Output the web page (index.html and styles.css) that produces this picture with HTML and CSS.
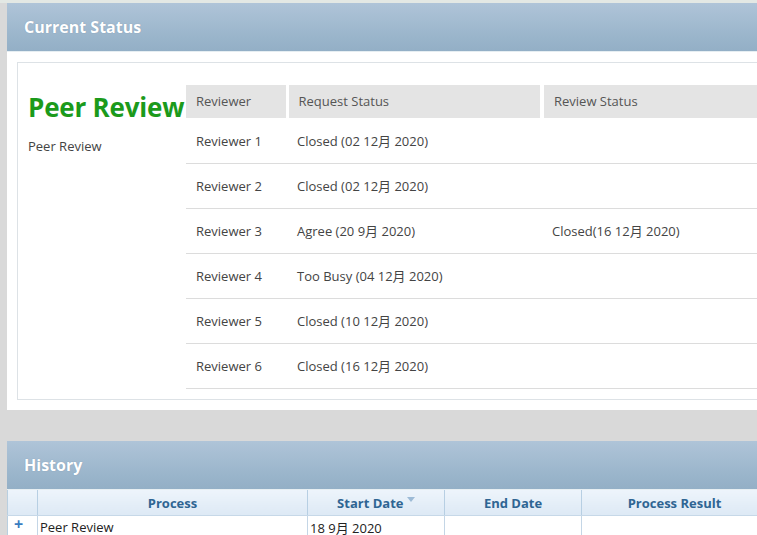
FILE: index.html
```html
<!DOCTYPE html>
<html lang="en">
<head>
    <meta charset="UTF-8">
    <meta name="viewport" content="width=device-width, initial-scale=1.0">
    <title>Current Status</title>
    <link rel="stylesheet" href="styles.css">
</head>
<body>
<div class="page">
    <!-- Current Status -->
    <section class="panel">
        <div class="panel-head">Current Status</div>
        <div class="panel-body">
            <div class="status-box">
                <div class="stage">
                    <h2>Peer Review</h2>
                    <p>Peer Review</p>
                </div>
                <table class="review-table">
                    <thead>
                        <tr>
                            <th class="col-reviewer">Reviewer</th>
                            <th class="col-request">Request Status</th>
                            <th class="col-review">Review Status</th>
                        </tr>
                    </thead>
                    <tbody>
                        <tr><td>Reviewer 1</td><td>Closed (02 12月 2020)</td><td></td></tr>
                        <tr><td>Reviewer 2</td><td>Closed (02 12月 2020)</td><td></td></tr>
                        <tr><td>Reviewer 3</td><td>Agree (20 9月 2020)</td><td>Closed(16 12月 2020)</td></tr>
                        <tr><td>Reviewer 4</td><td>Too Busy (04 12月 2020)</td><td></td></tr>
                        <tr><td>Reviewer 5</td><td>Closed (10 12月 2020)</td><td></td></tr>
                        <tr><td>Reviewer 6</td><td>Closed (16 12月 2020)</td><td></td></tr>
                    </tbody>
                </table>
            </div>
        </div>
    </section>

    <!-- History -->
    <section class="panel history">
        <div class="panel-head">History</div>
        <table class="history-grid">
            <thead>
                <tr>
                    <th class="col-expand"></th>
                    <th class="col-process">Process</th>
                    <th class="col-date">Start Date <span class="sort-arrow"></span></th>
                    <th class="col-date">End Date</th>
                    <th class="col-result">Process Result</th>
                </tr>
            </thead>
            <tbody>
                <tr>
                    <td class="expand">+</td>
                    <td>Peer Review</td>
                    <td>18 9月 2020</td>
                    <td></td>
                    <td></td>
                </tr>
            </tbody>
        </table>
    </section>
</div>
</body>
</html>
```

FILE: styles.css
```css
* {
    margin: 0;
    padding: 0;
    box-sizing: border-box;
}

body {
    font-family: 'Open Sans', 'Noto Sans', 'Noto Sans CJK SC', sans-serif;
    font-size: 13px;
    color: #444;
    background-color: #d9d9d9;
    overflow: hidden;
}

.page {
    width: 768px;
    padding-left: 7px;
    border-top: 3px solid #e3e8e4;
}

.panel {
    background: #fff;
}

.panel-head {
    height: 49px;
    padding-left: 17px;
    line-height: 48px;
    font-size: 16px;
    font-weight: bold;
    color: #fff;
    text-shadow: 0 0 1px rgba(60, 90, 120, 0.4);
    background: linear-gradient(#afc4d8, #9ab5cb 70%, #93afc6);
    border-bottom: 1px solid #e6eef2;
}

.panel-body {
    padding: 10px 0 10px 10px;
}

.status-box {
    display: flex;
    border: 1px solid #dde2e6;
    border-right: none;
    padding: 22px 0 10px 0;
}

.stage {
    width: 168px;
    padding-left: 10px;
}

.stage h2 {
    font-size: 26px;
    line-height: 44px;
    letter-spacing: -0.2px;
    color: #1b9a1b;
    white-space: nowrap;
}

.stage p {
    margin-top: 8px;
    color: #444;
}

.review-table {
    border-collapse: collapse;
    flex: 1;
}

.review-table th {
    height: 33px;
    padding-left: 10px;
    text-align: left;
    font-weight: normal;
    color: #555;
    background: #e4e4e4;
    border-right: 3px solid #fff;
    border-bottom: 1px solid #fff;
}

.review-table .col-reviewer {
    width: 101px;
}

.review-table .col-request {
    width: 255px;
    border-right-width: 4px;
}

.review-table td {
    height: 45px;
    padding-left: 10px;
    color: #444;
    border-bottom: 1px solid #dcdcdc;
    white-space: nowrap;
}

.history {
    margin-top: 31px;
}

.history-grid {
    width: 100%;
    border-collapse: collapse;
    border-left: 1px solid #b9cfe0;
}

.history-grid th {
    height: 26px;
    padding-top: 2px;
    font-weight: bold;
    color: #2f6593;
    background: linear-gradient(#edf4fb, #dde9f5);
    border-right: 1px solid #b7cfe3;
    border-bottom: 1px solid #c6d8e8;
}

.history-grid .col-expand {
    width: 30px;
}

.history-grid .col-process {
    width: 270px;
}

.history-grid .col-date {
    width: 137px;
}

.history-grid td {
    height: 22px;
    padding-left: 2px;
    padding-top: 1px;
    color: #222;
    border-right: 1px solid #c4d6e6;
    white-space: nowrap;
}

.history-grid td.expand {
    padding-left: 6px;
    padding-top: 0;
    font-size: 16px;
    line-height: 16px;
    vertical-align: top;
    color: #3a7cc0;
    font-weight: bold;
}

.sort-arrow {
    display: inline-block;
    width: 0;
    height: 0;
    border-left: 4px solid transparent;
    border-right: 4px solid transparent;
    border-top: 5px solid #9dbbd6;
    vertical-align: 6px;
}
```
